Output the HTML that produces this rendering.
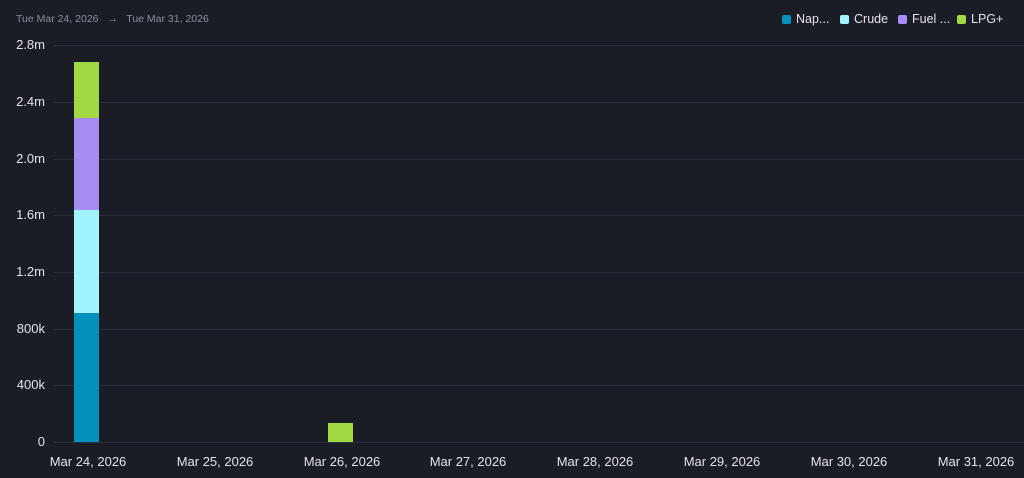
<!DOCTYPE html><html><head><style>
body{margin:0;width:1024px;height:478px;background:#1b1d26;font-family:"Liberation Sans",sans-serif;position:relative;overflow:hidden}
.a{position:absolute}
.g{position:absolute;left:54px;right:0;height:1px;background:#2c2f3a}
.y{position:absolute;right:979px;font-size:13px;color:#e3e4e8;line-height:14px}
.x{position:absolute;width:100px;text-align:center;font-size:13px;color:#e3e4e8;top:454px;margin-left:-50px}
.lg{position:absolute;top:12px;font-size:12.5px;color:#e3e4e8}
.lg i{display:inline-block;width:9px;height:9px;border-radius:2px;margin-right:5px;vertical-align:-1px}
</style></head><body>
<div class="a" style="left:16px;top:13px;font-size:10.5px;color:#8c8f99">Tue Mar 24, 2026 &nbsp;&nbsp;→&nbsp;&nbsp; Tue Mar 31, 2026</div>
<div class="lg" style="left:782px"><i style="background:#0290bc"></i>Nap...</div>
<div class="lg" style="left:840px"><i style="background:#a0f3ff"></i>Crude</div>
<div class="lg" style="left:898px"><i style="background:#a88cf5"></i>Fuel ...</div>
<div class="lg" style="left:957px"><i style="background:#a2d943"></i>LPG+</div>
<div class="g" style="top:45px"></div><div class="y" style="top:38px">2.8m</div>
<div class="g" style="top:102px"></div><div class="y" style="top:95px">2.4m</div>
<div class="g" style="top:159px"></div><div class="y" style="top:152px">2.0m</div>
<div class="g" style="top:215px"></div><div class="y" style="top:208px">1.6m</div>
<div class="g" style="top:272px"></div><div class="y" style="top:265px">1.2m</div>
<div class="g" style="top:329px"></div><div class="y" style="top:322px">800k</div>
<div class="g" style="top:385px"></div><div class="y" style="top:378px">400k</div>
<div class="g" style="top:442px"></div><div class="y" style="top:435px">0</div>
<div class="a" style="left:74px;top:62px;width:25px;height:56px;background:#a2d943"></div>
<div class="a" style="left:74px;top:118px;width:25px;height:92px;background:#a88cf5"></div>
<div class="a" style="left:74px;top:210px;width:25px;height:103px;background:#a0f3ff"></div>
<div class="a" style="left:74px;top:313px;width:25px;height:129px;background:#0290bc"></div>
<div class="a" style="left:328px;top:423px;width:25px;height:19px;background:#a2d943"></div>
<div class="x" style="left:88px">Mar 24, 2026</div>
<div class="x" style="left:215px">Mar 25, 2026</div>
<div class="x" style="left:342px">Mar 26, 2026</div>
<div class="x" style="left:468px">Mar 27, 2026</div>
<div class="x" style="left:595px">Mar 28, 2026</div>
<div class="x" style="left:722px">Mar 29, 2026</div>
<div class="x" style="left:849px">Mar 30, 2026</div>
<div class="x" style="left:976px">Mar 31, 2026</div>
</body></html>
